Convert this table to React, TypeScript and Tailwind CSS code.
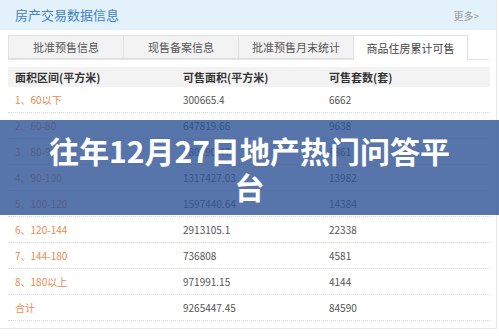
import React from 'react';

const tabs = ['批准预售信息', '现售备案信息', '批准预售月末统计', '商品住房累计可售'];

const rows = [
  ['1、60以下', '300665.4', '6662'],
  ['2、60-80', '647819.66', '9638'],
  ['3、80-90', '780190.47', '8861'],
  ['4、90-100', '1317427.03', '13982'],
  ['5、100-120', '1597440.64', '14384'],
  ['6、120-144', '2913105.1', '22338'],
  ['7、144-180', '736808', '4581'],
  ['8、180以上', '971991.15', '4144'],
  ['合计', '9265447.45', '84590']
];

export default function App() {
  return (
    <div
      className="relative w-[499px] h-[336px] bg-white overflow-hidden"
      style={{ fontFamily: '"Microsoft YaHei", "Noto Sans CJK SC", sans-serif' }}
    >
      <div className="w-[497px] h-[329px] border-r border-b border-[#e6e6e6] flex flex-col">
        <div className="h-[30px] bg-[#e3f1fb] flex items-center justify-between pl-[15px] pr-[17px]">
          <span className="text-[13px] text-[#3d83c6]">房产交易数据信息</span>
          <span className="text-[10px] text-[#9a9a9a]">更多&gt;</span>
        </div>
        <div className="flex mt-[5px] ml-[8px] border-b border-[#e3e3e3] mr-[7px]">
          {tabs.map((t, i) => (
            <div
              key={t}
              className={
                i === 3
                  ? 'w-[115px] h-[25px] flex items-center justify-center text-[11px] text-[#444] bg-white border border-b-0 border-[#e0e0e0] -mb-px'
                  : 'w-[115px] h-[24px] flex items-center justify-center text-[11px] text-[#555] bg-[#f3f3f3] border border-r-0 border-[#e0e0e0]'
              }
            >
              {t}
            </div>
          ))}
        </div>
        <div className="mx-[8px] mt-[7px] w-[482px]">
          <div className="h-[20px] bg-[#f3f3f3] flex items-center text-[11px] text-[#333] font-bold">
            <div className="w-[175px] pl-[7px]">面积区间(平方米)</div>
            <div className="w-[146px]">可售面积(平方米)</div>
            <div>可售套数(套)</div>
          </div>
          {rows.map((r) => (
            <div
              key={r[0]}
              className="h-[26px] flex items-center text-[10px] border-b border-dotted border-[#d8d8d8]"
            >
              <div className="w-[175px] pl-[7px] text-[#ea8a50]">{r[0]}</div>
              <div className="w-[146px] text-[#555]">{r[1]}</div>
              <div className="text-[#555]">{r[2]}</div>
            </div>
          ))}
        </div>
      </div>
      <div className="absolute left-0 top-[120px] w-full h-[95px] bg-[rgba(46,82,150,0.8)] flex items-center justify-center">
        <div className="max-w-[412px] text-center text-white font-bold text-[30px] leading-[36px]">
          往年12月27日地产热门问答平台
        </div>
      </div>
    </div>
  );
}
